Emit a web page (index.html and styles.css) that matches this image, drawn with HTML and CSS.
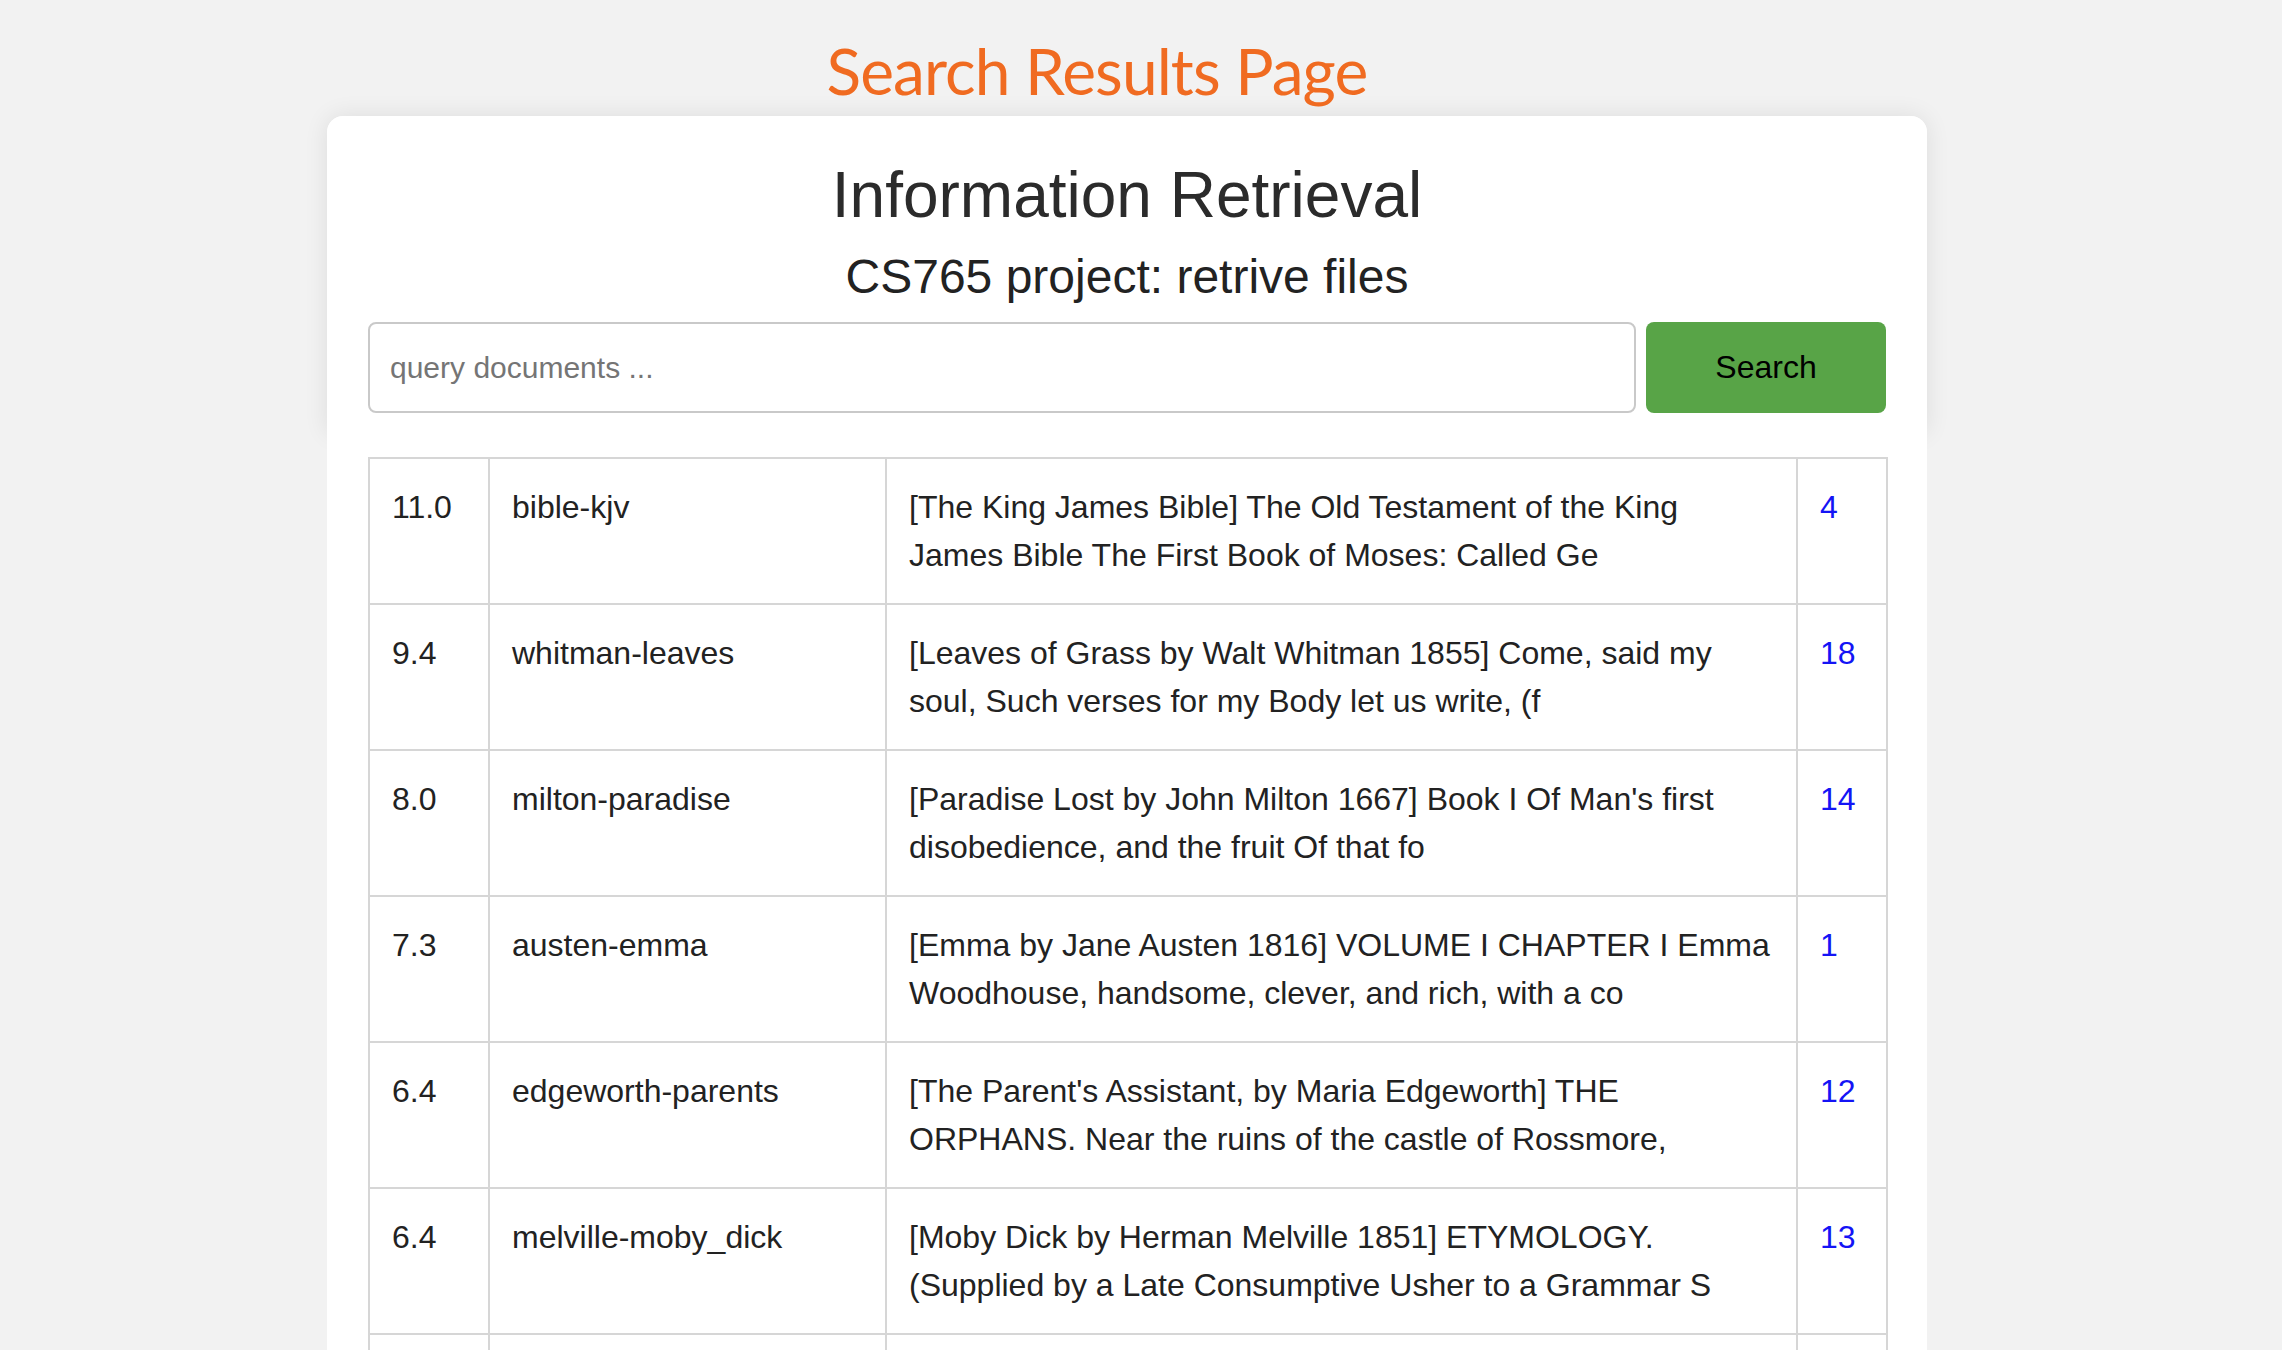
FILE: index.html
```html
<!DOCTYPE html>
<html lang="en">
<head>
<meta charset="utf-8">
<title>Search Results Page</title>
<link rel="stylesheet" href="styles.css">
</head>
<body>
<div class="page">
  <h1 class="page-title">Search Results Page</h1>
  <div class="card">
    <header class="card-head">
      <h1 class="app-title">Information Retrieval</h1>
      <h2 class="app-sub">CS765 project: retrive files</h2>
      <form class="search">
        <input class="search-input" type="text" placeholder="query documents ...">
        <button class="search-btn" type="button">Search</button>
      </form>
    </header>
    <section class="results">
      <table class="res-table">
        <colgroup>
          <col class="c-score"><col class="c-name"><col class="c-text"><col class="c-link">
        </colgroup>
        <tbody>
          <tr><td>11.0</td><td>bible-kjv</td><td>[The King James Bible] The Old Testament of the King James Bible The First Book of Moses: Called Ge</td><td><a href="#">4</a></td></tr>
          <tr><td>9.4</td><td>whitman-leaves</td><td>[Leaves of Grass by Walt Whitman 1855] Come, said my soul, Such verses for my Body let us write, (f</td><td><a href="#">18</a></td></tr>
          <tr><td>8.0</td><td>milton-paradise</td><td>[Paradise Lost by John Milton 1667] Book I Of Man's first disobedience, and the fruit Of that fo</td><td><a href="#">14</a></td></tr>
          <tr><td>7.3</td><td>austen-emma</td><td>[Emma by Jane Austen 1816] VOLUME I CHAPTER I Emma Woodhouse, handsome, clever, and rich, with a co</td><td><a href="#">1</a></td></tr>
          <tr><td>6.4</td><td>edgeworth-parents</td><td>[The Parent's Assistant, by Maria Edgeworth] THE ORPHANS. Near the ruins of the castle of Rossmore,</td><td><a href="#">12</a></td></tr>
          <tr><td>6.4</td><td>melville-moby_dick</td><td>[Moby Dick by Herman Melville 1851] ETYMOLOGY. (Supplied by a Late Consumptive Usher to a Grammar S</td><td><a href="#">13</a></td></tr>
          <tr class="row-more"><td>&nbsp;</td><td>&nbsp;</td><td>&nbsp;</td><td>&nbsp;</td></tr>
        </tbody>
      </table>
    </section>
  </div>
</div>
</body>
</html>
```

FILE: styles.css
```css
html, body {
  margin: 0;
  padding: 0;
}
body {
  background: #f2f2f2;
  font-family: "Liberation Sans", Arial, Helvetica, sans-serif;
  color: #222;
  padding-right: 28px;
}
.page {
  width: 1600px;
  margin: 0 auto;
}
.page-title {
  margin: 0 0 5px 0;
  padding: 31px 60px 0 0;
  text-align: center;
  font-family: "Lato", "Noto Sans", sans-serif;
  font-weight: 400;
  font-size: 64px;
  line-height: 80px;
  letter-spacing: -0.9px;
  color: #f06b21;
}
.card {
  background: #fff;
  border-radius: 16px 16px 0 0;
}
.card-head {
  background: #fff;
  border-radius: 16px 16px 0 0;
  box-shadow: 0 0 24px rgba(0, 0, 0, 0.09);
  padding: 42px 41px 20px;
  text-align: center;
}
.app-title {
  margin: 0;
  font-size: 64px;
  line-height: 74px;
  font-weight: 400;
  color: #2b2b2b;
}
.app-sub {
  margin: 17px 0 0;
  font-size: 48px;
  line-height: 56px;
  font-weight: 400;
  color: #222;
}
.search {
  margin: 17px 0 0;
  display: flex;
  gap: 10px;
  height: 91px;
}
.search-input {
  flex: 1;
  box-sizing: border-box;
  height: 91px;
  border: 2px solid #c9c9c9;
  border-radius: 8px;
  padding: 0 20px;
  font-family: "Liberation Sans", Arial, sans-serif;
  font-size: 30px;
  color: #222;
  outline: none;
}
.search-input::placeholder {
  color: #757575;
}
.search-btn {
  width: 240px;
  height: 91px;
  border: none;
  border-radius: 8px;
  background: #58a447;
  color: #000;
  font-family: "Liberation Sans", Arial, sans-serif;
  font-size: 32px;
  cursor: pointer;
}
.results {
  position: relative;
  background: #fff;
  padding: 24px 41px 40px;
}
.res-table {
  width: 1518px;
  table-layout: fixed;
  border-collapse: collapse;
  font-size: 32px;
  line-height: 48px;
  color: #222;
}
.c-score { width: 120px; }
.c-name { width: 397px; }
.c-text { width: 911px; }
.c-link { width: 90px; }
.res-table td {
  border: 2px solid #d6d6d6;
  padding: 24px 22px;
  vertical-align: top;
  text-align: left;
}
.res-table .row-more td {
  height: 96px;
}
.res-table a {
  color: #1414f5;
  text-decoration: none;
}
```
